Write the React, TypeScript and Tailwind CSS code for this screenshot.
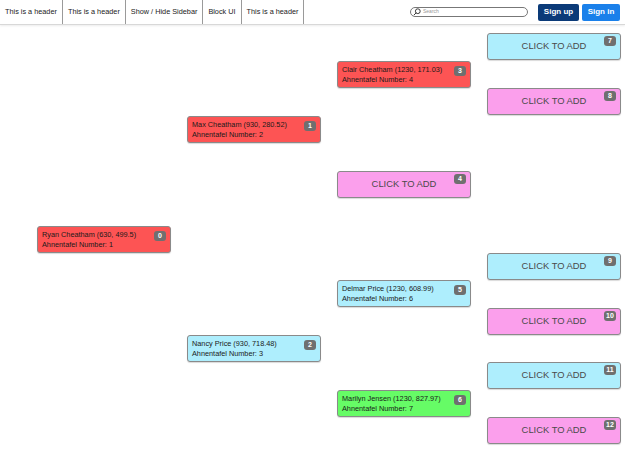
import React from "react";

type Node = {
  id: number;
  x: number;
  y: number;
  kind: "red" | "blue" | "pink" | "green";
  name?: string;
  num?: number;
};

const nodes: Node[] = [
  { id: 0, x: 37, y: 226, kind: "red", name: "Ryan Cheatham (630, 499.5)", num: 1 },
  { id: 1, x: 187, y: 116, kind: "red", name: "Max Cheatham (930, 280.52)", num: 2 },
  { id: 2, x: 187, y: 335, kind: "blue", name: "Nancy Price (930, 718.48)", num: 3 },
  { id: 3, x: 337, y: 61, kind: "red", name: "Clair Cheatham (1230, 171.03)", num: 4 },
  { id: 4, x: 337, y: 171, kind: "pink" },
  { id: 5, x: 337, y: 280, kind: "blue", name: "Delmar Price (1230, 608.99)", num: 6 },
  { id: 6, x: 337, y: 390, kind: "green", name: "Marilyn Jensen (1230, 827.97)", num: 7 },
  { id: 7, x: 487, y: 33, kind: "blue" },
  { id: 8, x: 487, y: 88, kind: "pink" },
  { id: 9, x: 487, y: 253, kind: "blue" },
  { id: 10, x: 487, y: 308, kind: "pink" },
  { id: 11, x: 487, y: 362, kind: "blue" },
  { id: 12, x: 487, y: 417, kind: "pink" },
];

const bg = {
  red: "bg-[#fd5454]",
  blue: "bg-[#aeeefd]",
  pink: "bg-[#fb9fec]",
  green: "bg-[#66fc66]",
};

const tabs = ["This is a header", "This is a header", "Show / Hide Sidebar", "Block UI", "This is a header"];

function PersonBox({ n }: { n: Node }) {
  const empty = !n.name;
  return (
    <div
      className={`absolute w-[134px] h-[27px] rounded-[3px] border border-[#8a8a8a] shadow-[0_1px_1px_rgba(0,0,0,0.15)] ${bg[n.kind]}`}
      style={{ left: n.x, top: n.y }}
    >
      {empty ? (
        <div className="h-full flex items-center justify-center text-[9.4px] text-[#4a4a4a]">
          CLICK TO ADD
        </div>
      ) : (
        <div className="pl-[4px] pt-[3px] text-[7.3px] leading-[10px] text-[#1a1a1a]">
          <div>{n.name}</div>
          <div>Ahnentafel Number: {n.num}</div>
        </div>
      )}
      <span
        className={`absolute right-[4px] ${empty ? "top-[2px]" : "top-[4px]"} min-w-[12px] h-[10px] px-[2px] rounded-[3px] bg-[#6f6f6f] text-white text-[7px] leading-[10px] font-bold text-center`}
      >
        {n.id}
      </span>
    </div>
  );
}

export default function App() {
  return (
    <div className="w-[625px] h-[452px] bg-white font-['Liberation_Sans',Arial,sans-serif] relative overflow-hidden">
      <div className="h-[25px] flex items-stretch border-b border-[#d8d8d8] shadow-[0_1px_2px_rgba(0,0,0,0.08)]">
        {tabs.map((t, i) => (
          <div
            key={i}
            className="px-[5px] flex items-center border-r border-[#9a9a9a] text-[7.3px] text-[#222]"
          >
            {t}
          </div>
        ))}
        <div className="flex-1" />
        <div className="flex items-center mr-[10px]">
          <div className="w-[118px] h-[10px] rounded-full border border-[#777] flex items-center pl-[2px] gap-[2px]">
            <svg width="8" height="8" viewBox="0 0 10 10" fill="none" stroke="#333" strokeWidth="1.2">
              <circle cx="6" cy="4" r="3" />
              <path d="M4 6 L1 9" />
            </svg>
            <span className="text-[5px] text-[#999]">Search</span>
          </div>
        </div>
        <div className="flex items-center gap-[3px] mr-[5px]">
          <button className="w-[41px] h-[17px] rounded-[2px] bg-[#0b3a78] text-white text-[8px] font-bold">
            Sign up
          </button>
          <button className="w-[38px] h-[17px] rounded-[2px] bg-[#1a80ea] text-white text-[8px] font-bold">
            Sign in
          </button>
        </div>
      </div>
      {nodes.map((n) => (
        <PersonBox key={n.id} n={n} />
      ))}
    </div>
  );
}
